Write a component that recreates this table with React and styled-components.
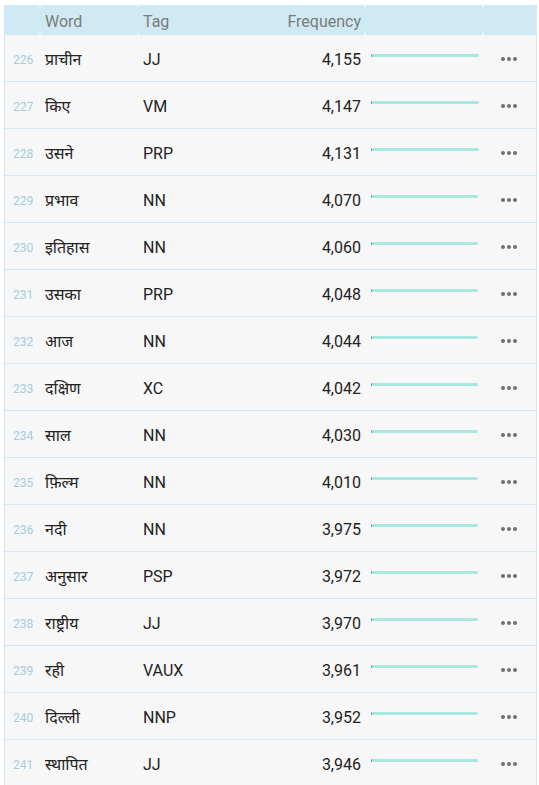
import React from 'react';
import styled, { createGlobalStyle } from 'styled-components';

const GlobalStyle = createGlobalStyle`
  body {
    margin: 0;
    background: #fff;
    font-family: Roboto, "Noto Sans", "Liberation Sans", sans-serif;
  }
`;

const rows = [
  [226, 'प्राचीन', 'JJ', '4,155'],
  [227, 'किए', 'VM', '4,147'],
  [228, 'उसने', 'PRP', '4,131'],
  [229, 'प्रभाव', 'NN', '4,070'],
  [230, 'इतिहास', 'NN', '4,060'],
  [231, 'उसका', 'PRP', '4,048'],
  [232, 'आज', 'NN', '4,044'],
  [233, 'दक्षिण', 'XC', '4,042'],
  [234, 'साल', 'NN', '4,030'],
  [235, 'फ़िल्म', 'NN', '4,010'],
  [236, 'नदी', 'NN', '3,975'],
  [237, 'अनुसार', 'PSP', '3,972'],
  [238, 'राष्ट्रीय', 'JJ', '3,970'],
  [239, 'रही', 'VAUX', '3,961'],
  [240, 'दिल्ली', 'NNP', '3,952'],
  [241, 'स्थापित', 'JJ', '3,946'],
];

const Table = styled.div`
  margin: 5px 2px 0 4px;
`;

const HeaderRow = styled.div`
  display: grid;
  grid-template-columns: 36px 98px 112px 115px 118px 1fr;
  height: 30px;
  background: #cfeaf3;
`;

const HeadCell = styled.div`
  display: flex;
  align-items: center;
  justify-content: ${({ $right }) => ($right ? 'flex-end' : 'flex-start')};
  padding: 2px ${({ $right }) => ($right ? '4px' : '0')} 0 ${({ $right }) => ($right ? '0' : '5px')};
  font-size: 16px;
  color: #7b7b7b;
  position: relative;
  &::before,
  &::after {
    content: '';
    position: absolute;
    left: -1px;
    width: 2px;
    height: 2px;
    background: ${({ $tick }) => ($tick ? '#eef8fb' : 'transparent')};
  }
  &::before {
    top: 0;
  }
  &::after {
    bottom: 0;
  }
`;

const Body = styled.div`
  border-left: 1px solid #cde8f2;
  border-right: 1px solid #cde8f2;
  background: #f7f7f7;
`;

const Row = styled.div`
  display: grid;
  grid-template-columns: 35px 98px 112px 115px 118px 1fr;
  padding-top: 3px;
  box-sizing: border-box;
  height: 47px;
  border-bottom: 1px solid #cde8f2;
  align-items: center;
`;

const Index = styled.div`
  font-size: 12px;
  color: #a3cde1;
  padding-left: 8px;
  padding-top: 1px;
`;

const Word = styled.div`
  font-size: 16px;
  color: #222;
  padding: 3px 0 0 5px;
  font-family: "Noto Sans Devanagari", "Noto Sans", Roboto, sans-serif;
`;

const Tag = styled.div`
  font-size: 16px;
  color: #222;
  padding-left: 5px;
`;

const Freq = styled.div`
  font-size: 16px;
  color: #222;
  text-align: right;
  padding-right: 4px;
`;

const BarCell = styled.div`
  padding: 0 0 9px 6px;
  display: flex;
`;

const Bar = styled.div`
  height: 3px;
  border-radius: 2px;
  background: #a8e8e3;
  border-left: 1px solid #3f8f93;
`;

const Actions = styled.div`
  display: flex;
  justify-content: center;
  gap: 2px;
  padding: 0 2px 2px 0;
`;

const Dot = styled.span`
  width: 4px;
  height: 4px;
  border-radius: 50%;
  background: #707070;
`;

const maxFreq = 4155;

export default function App() {
  return (
    <>
      <GlobalStyle />
      <Table>
        <HeaderRow>
          <HeadCell />
          <HeadCell $tick>Word</HeadCell>
          <HeadCell $tick>Tag</HeadCell>
          <HeadCell $right>Frequency</HeadCell>
          <HeadCell $tick />
          <HeadCell $tick />
        </HeaderRow>
        <Body>
          {rows.map(([n, w, t, f]) => {
            const value = parseInt(f.replace(',', ''), 10);
            return (
              <Row key={n}>
                <Index>{n}</Index>
                <Word>{w}</Word>
                <Tag>{t}</Tag>
                <Freq>{f}</Freq>
                <BarCell>
                  <Bar style={{ width: `${80 + (value / maxFreq) * 27}px` }} />
                </BarCell>
                <Actions>
                  <Dot />
                  <Dot />
                  <Dot />
                </Actions>
              </Row>
            );
          })}
        </Body>
      </Table>
    </>
  );
}
